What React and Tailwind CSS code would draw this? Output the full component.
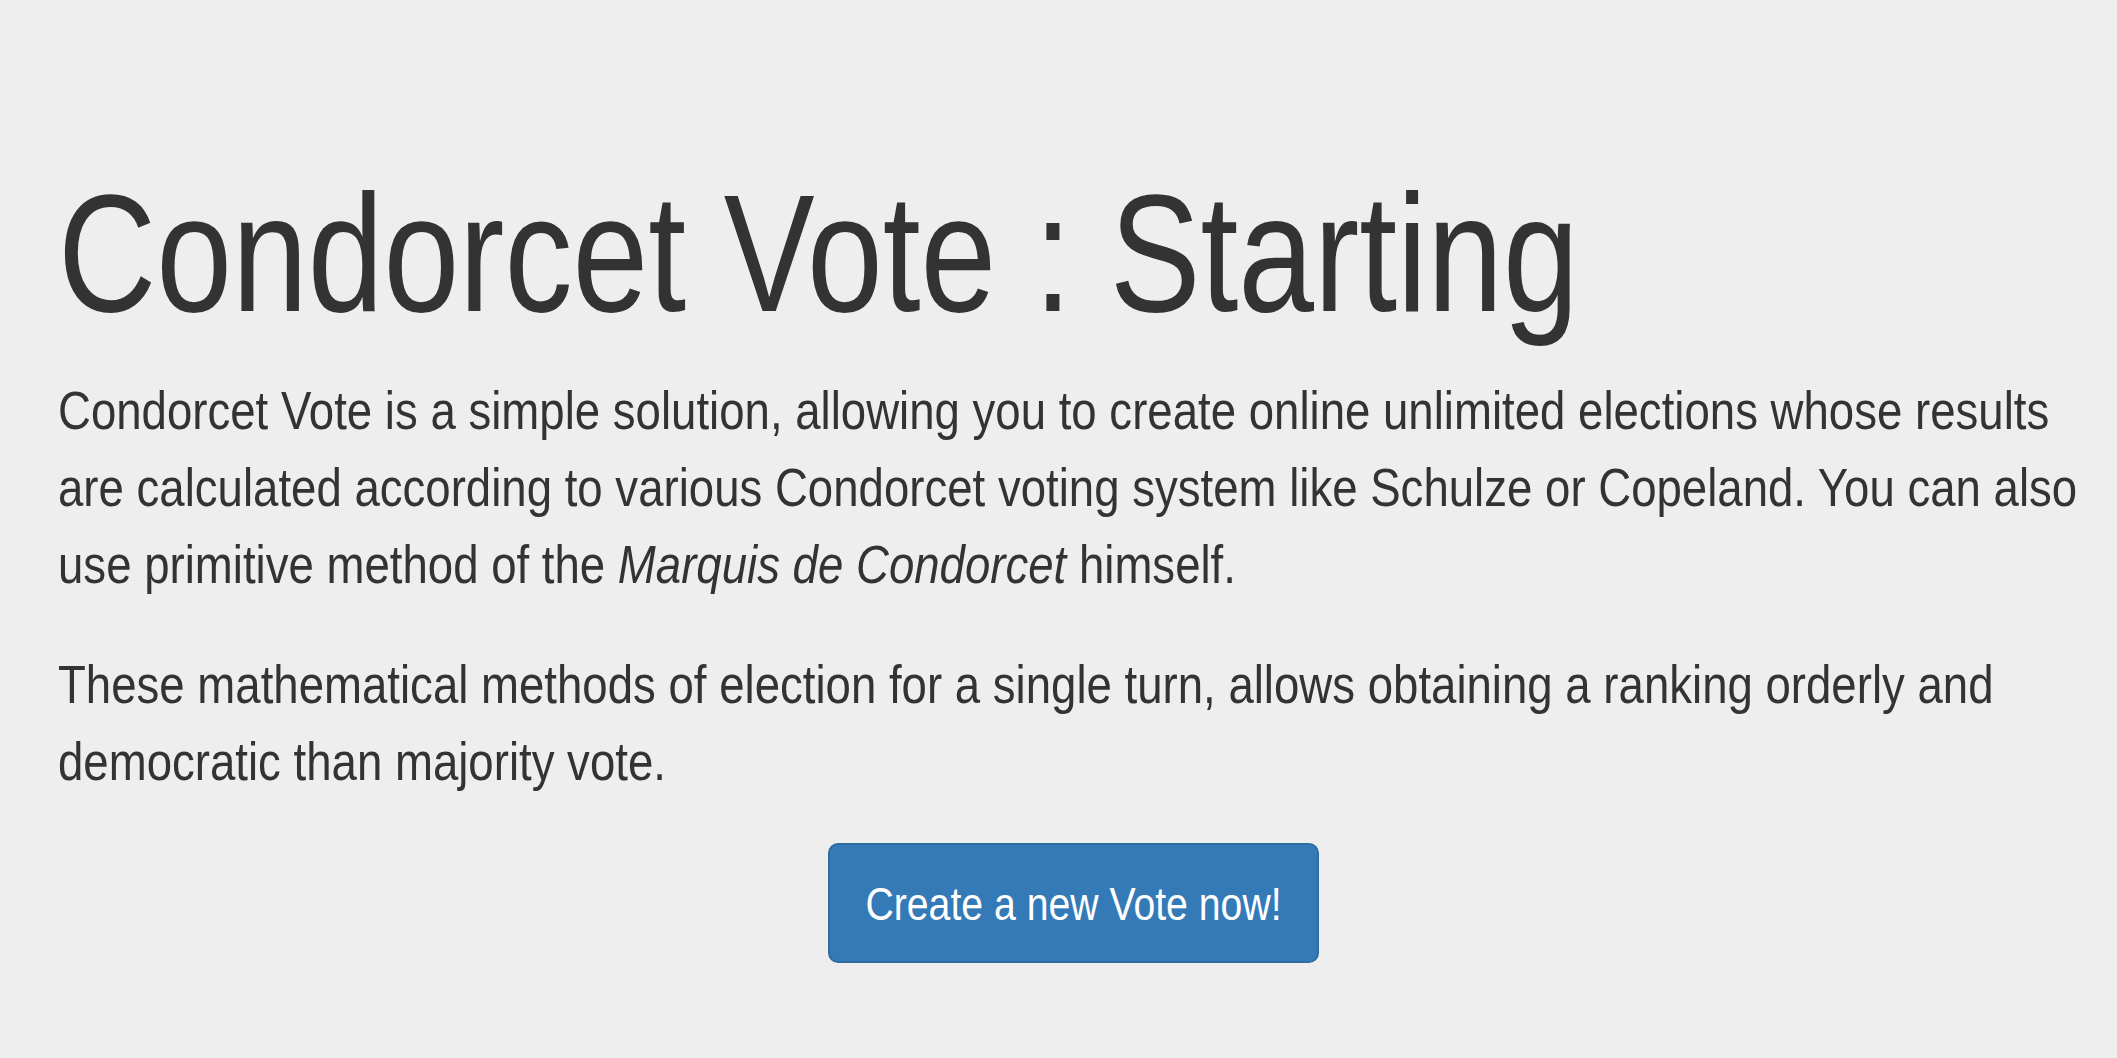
export default function App() {
  const font = { fontFamily: '"Liberation Sans", Arial, Helvetica, sans-serif' };
  return (
    <div className="min-h-[1058px] w-full overflow-hidden bg-[#eeeeee] text-[#333333]" style={font}>
      <div className="pl-[58px] pr-[28px] pt-[161px]">
        <h1 className="m-0 w-[2400px] origin-left scale-x-[0.815] whitespace-nowrap text-[167px] leading-[184px] font-normal">
          Condorcet Vote : Starting
        </h1>
        <p className="mt-[27px] mb-0 w-[2500px] origin-left scale-x-[0.844] whitespace-nowrap text-[54px] leading-[77px]">
          Condorcet Vote is a simple solution, allowing you to create online unlimited elections whose results
          <br />
          are calculated according to various Condorcet voting system like Schulze or Copeland. You can also
          <br />
          use primitive method of the <em>Marquis de Condorcet</em> himself.
        </p>
        <p className="mt-[43px] mb-0 w-[2500px] origin-left scale-x-[0.844] whitespace-nowrap text-[54px] leading-[77px]">
          These mathematical methods of election for a single turn, allows obtaining a ranking orderly and
          <br />
          democratic than majority vote.
        </p>
        <div className="mt-[43px] flex justify-center">
          <button className="flex h-[120px] w-[491px] items-center justify-center rounded-[10px] border-2 border-[#2e6da4] bg-[#337ab7] text-white">
            <span className="inline-block scale-x-[0.834] whitespace-nowrap text-[47px] leading-[47px]">Create a new Vote now!</span>
          </button>
        </div>
      </div>
    </div>
  );
}
